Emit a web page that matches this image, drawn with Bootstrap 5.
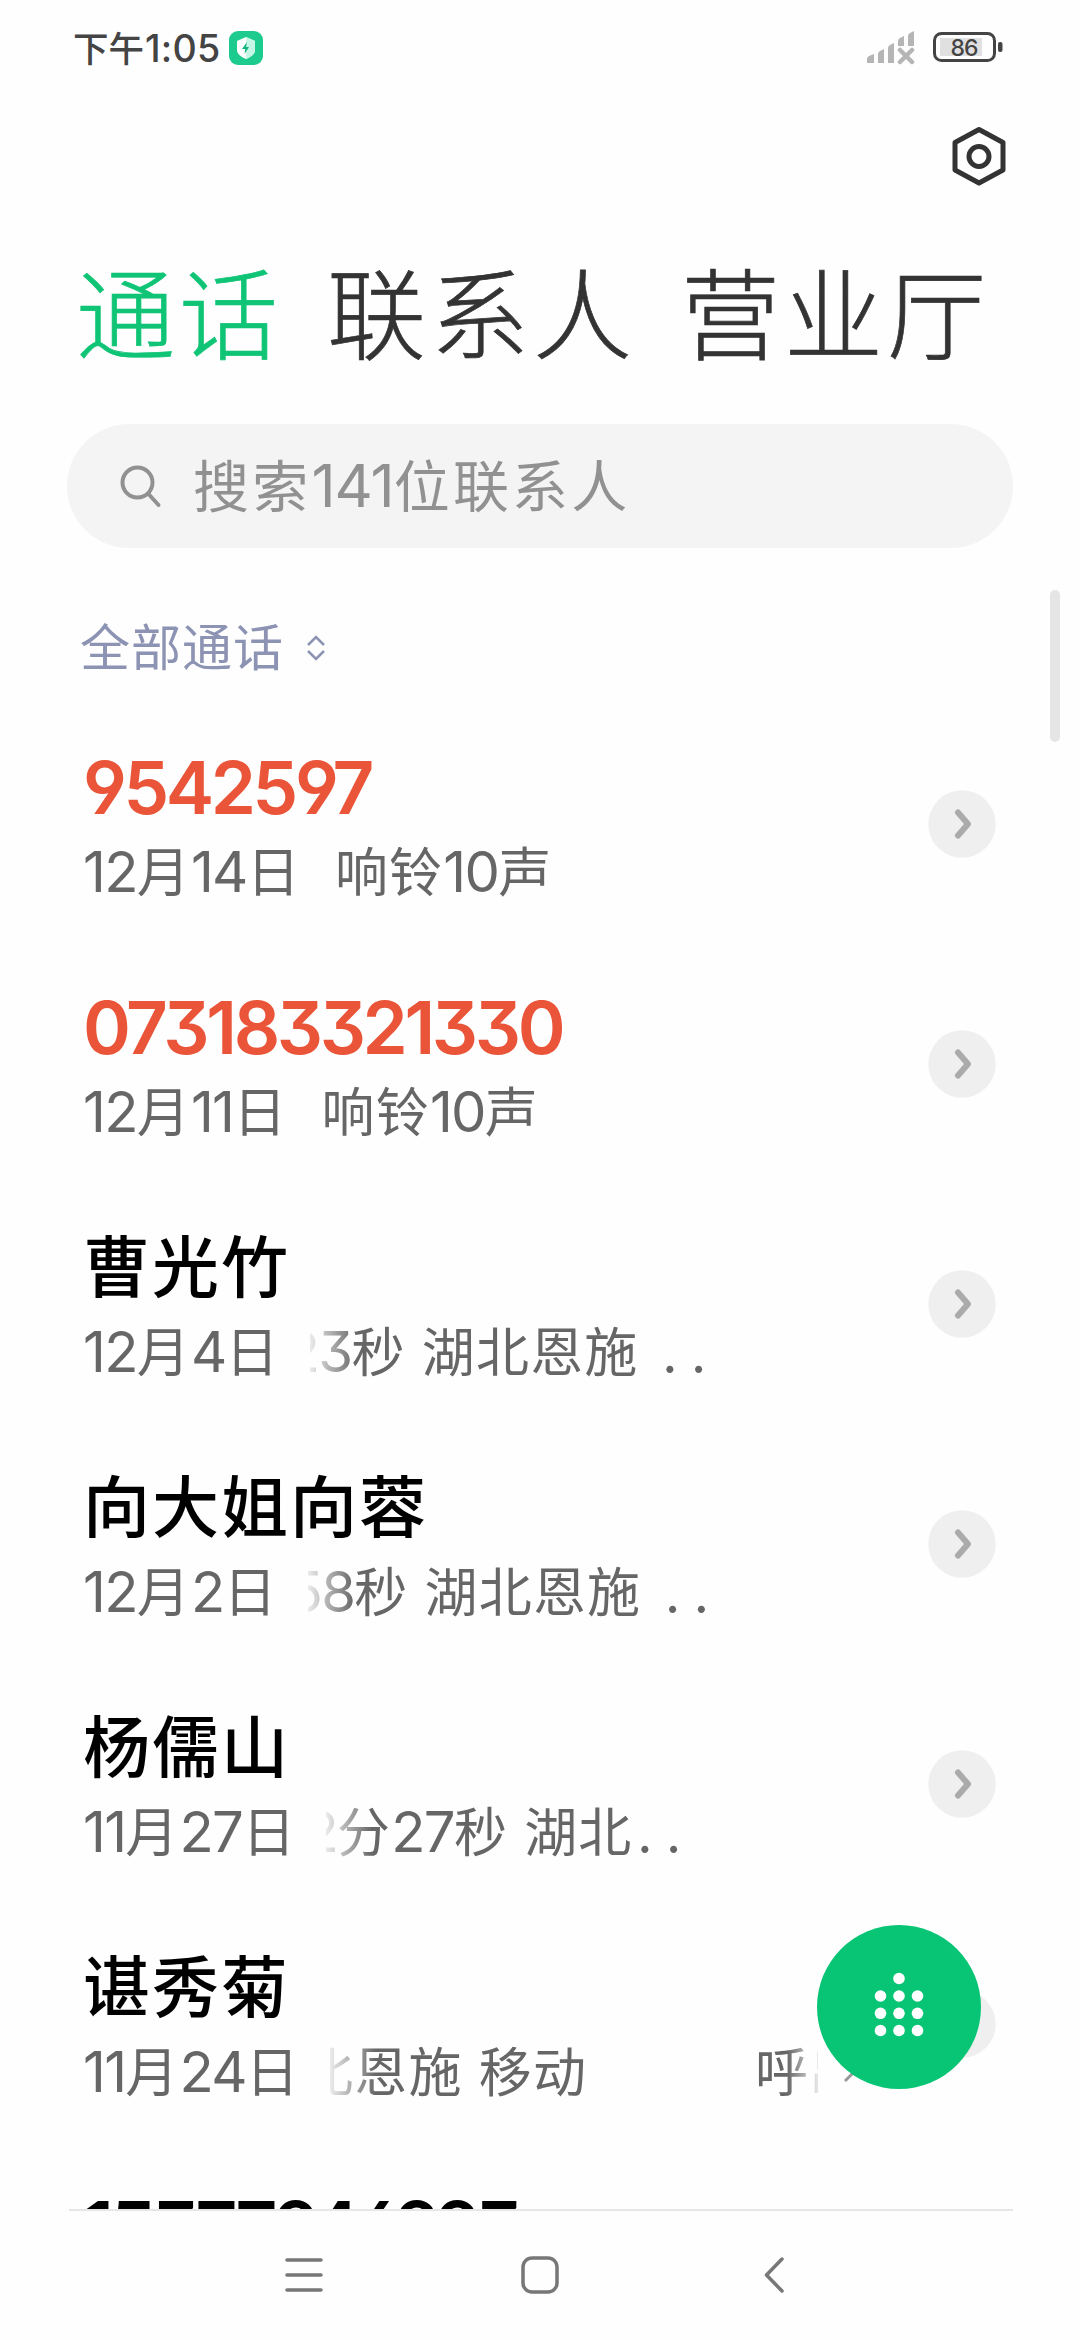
<!DOCTYPE html>
<html lang="zh-CN">
<head>
<meta charset="utf-8">
<meta name="viewport" content="width=device-width, initial-scale=1">
<title>通话</title>
<link href="https://cdn.jsdelivr.net/npm/bootstrap@5.3.0/dist/css/bootstrap.min.css" rel="stylesheet">
<script src="https://cdn.jsdelivr.net/npm/bootstrap@5.3.0/dist/js/bootstrap.bundle.min.js"></script>
<style>
  body { width: 1080px; height: 2340px; overflow: hidden; background: #fefefe; font-family: "Noto Sans CJK SC", sans-serif; color: #333; white-space: nowrap; }
  svg { display: block; flex: none; }
  .num { font-family: Inter, "Noto Sans CJK SC", sans-serif; font-feature-settings: "cv03", "cv04", "cv09"; font-size: 1.06em; line-height: 1; letter-spacing: -.03em; }
  .statusbar { height: 96px; padding: 0 77px 2px 73px; font-size: 35.5px; font-weight: 500; color: #444; }
  .statusbar .num { letter-spacing: .005em; margin-left: 1px; }
  .shield { margin: 2px 0 0 9px; }
  .batt { margin: 0 0 0 17px; }
  .statusbar .sig { margin-top: 2px; }
  .toolbar-top { height: 120px; padding-right: 73px; }
  .tabs-big { height: 208px; padding-left: 76px; font-size: 99px; font-weight: 300; -webkit-text-stroke: .7px currentColor; letter-spacing: 4px; line-height: 187px; gap: 45px; }
  .tab-on { color: #10c476; }
  .searchbox { height: 124px; margin: 0 67px 0 67px; padding-left: 52px; background: #f4f4f4; color: #919191; font-size: 56px; letter-spacing: 3.2px; }
  .searchbox .num { letter-spacing: -.018em; }
  .search-hint { margin: -7px 0 0 30px; }
  .filterbar { height: 156px; padding: 52px 0 0 80px; color: #8d93b3; font-size: 50px; letter-spacing: 1px; line-height: 88px; }
  .sorter { margin: 29px 0 0 22px; }
  .calls { height: 1505px; overflow: hidden; }
  .call-row { height: 240px; padding: 42px 84px 0 83px; background: transparent; border: 0; flex: none; color: #000; }
  .call-name { height: 74px; line-height: 74px; font-size: 67px; font-weight: 500; letter-spacing: 2px; }
  .call-name .num { font-size: 1.085em; font-weight: 570; letter-spacing: -.047em; position: relative; top: 2px; }
  .missed { color: #ea5539; }
  .call-sub { height: 78px; line-height: 78px; margin-top: 10px; font-size: 53px; color: #666; letter-spacing: 1.2px; word-spacing: 3px; }
  .ring { margin-left: 34px; }
  .marquee { margin-left: 30px; overflow: hidden; -webkit-mask-image: linear-gradient(90deg, rgba(0,0,0,.12), #000 46px); mask-image: linear-gradient(90deg, rgba(0,0,0,.12), #000 46px); }
  .slide { display: inline-block; }
  .s-a { margin-left: -24px; } .s-b { margin-left: -19px; } .s-c { margin-left: -22px; } .s-d { margin-left: -30px; }
  .dots { letter-spacing: 14px; margin-left: 24px; }
  .dots-near { margin-left: 5px; }
  .outgoing { margin-left: 168px; width: 63px; overflow: hidden; -webkit-mask-image: linear-gradient(90deg, #000 32px, rgba(0,0,0,.15)); mask-image: linear-gradient(90deg, #000 32px, rgba(0,0,0,.15)); }
  .out-arrow { margin: 23px 0 0 25px; }
  .go { position: relative; margin-top: 44px; }
  .row-out .go { margin-left: -200px; }
  .dialpad { position: absolute; left: 817px; top: 1925px; width: 164px; height: 164px; background: #07c575; border: 0; padding: 0; }
  .scroll-thumb { position: absolute; left: 1050px; top: 590px; width: 10px; height: 152px; background: #e5e5e5; }
  .navline { height: 2px; margin: 0 67px 0 69px; background: #e6e6e6; }
  .sysnav { height: 129px; padding: 0 285px 1px 284px; }
</style>
</head>
<body>
<svg width="0" height="0" class="position-absolute">
  <symbol id="chev" viewBox="0 0 68 68"><circle cx="34" cy="34" r="33.700" fill="#efefef"/><path d="M30 22.500L40 34 30 45.500" fill="none" stroke="#aaa" stroke-width="6" stroke-linecap="round" stroke-linejoin="round"/></symbol>
</svg>
<div class="statusbar d-flex align-items-center">
  <span>下午<span class="num">1:05</span></span>
  <svg class="shield" width="34" height="34" viewBox="0 0 34 34"><rect width="34" height="34" rx="9" fill="#1ccb8d"/><path d="M17 6l9 4v9c0 4-4 7-9 9-5-2-9-5-9-9v-9z" fill="#fff"/><path d="M17 6l9 4v9c0 4-4 7-9 9z" fill="#c6f7e6"/><path d="M18 11l-5 7h3.200l-.7 5 4.500-7H17z" fill="#14b57c"/></svg>
  <svg class="ms-auto sig" width="50" height="34" viewBox="0 0 50 34" fill="#b5b5b5"><path d="M1 32v-4q0-2 2-3l5-2v9zM12 32V23q0-2 2-3l4-2v14zM22 32V17q0-2 2-3l4-2v20zM32 15v-5q0-2 2-3l4-2v10zM42 15V5q0-2 2-3l4-2v15z"/><path d="M34 19l12 12m0-12L34 31" stroke="#b5b5b5" stroke-width="4.500" stroke-linecap="round"/></svg>
  <svg class="batt" width="70" height="34" viewBox="0 0 70 34"><rect x="1.500" y="3.500" width="60" height="27" rx="7" fill="none" stroke="#444" stroke-width="3"/><rect x="7" y="8" width="42" height="18" fill="#e0e0e0"/><rect x="65" y="12" width="4.500" height="10" rx="2" fill="#444"/><text x="17.500" y="25.500" font-family="Inter" font-size="23" font-weight="500" fill="#444" textLength="28">86</text></svg>
</div>
<div class="toolbar-top d-flex align-items-center justify-content-end">
  <svg width="56" height="62" viewBox="0 0 56 62" fill="none" stroke="#333" stroke-width="5" stroke-linejoin="round"><path d="M28 4.500L52 17.500V45L28 58 4 45V17.500z"/><circle cx="28" cy="31.500" r="10"/></svg>
</div>
<div class="tabs-big d-flex">
  <span class="tab-on">通话</span><span>联系人</span><span>营业厅</span>
</div>
<div class="searchbox rounded-pill d-flex align-items-center">
  <svg width="44" height="44" viewBox="0 0 44 44" fill="none" stroke="#919191" stroke-width="4" stroke-linecap="round"><circle cx="18.500" cy="18.500" r="15"/><path d="M29.500 30l10 11"/></svg>
  <span class="search-hint">搜索<span class="num">141</span>位联系人</span>
</div>
<div class="filterbar d-flex align-items-start">
  <span>全部通话</span>
  <svg class="sorter" width="20" height="40" viewBox="0 0 20 40" fill="none" stroke="#8d93b3" stroke-width="2.500"><path d="M2 16l8-8 8 8M2 22l8 8 8-8"/></svg>
</div>
<div class="calls list-group list-group-flush">
  <div class="list-group-item call-row d-flex justify-content-between">
    <div>
      <div class="call-name missed"><span class="num">9542597</span></div>
      <div class="call-sub d-flex"><span><span class="num">12</span>月<span class="num">14</span>日</span><span class="ring">响铃<span class="num">10</span>声</span></div>
    </div>
    <svg class="go" width="68" height="68"><use href="#chev"/></svg>
  </div>
  <div class="list-group-item call-row d-flex justify-content-between">
    <div>
      <div class="call-name missed"><span class="num">073183321330</span></div>
      <div class="call-sub d-flex"><span><span class="num">12</span>月<span class="num">11</span>日</span><span class="ring">响铃<span class="num">10</span>声</span></div>
    </div>
    <svg class="go" width="68" height="68"><use href="#chev"/></svg>
  </div>
  <div class="list-group-item call-row d-flex justify-content-between">
    <div>
      <div class="call-name">曹光竹</div>
      <div class="call-sub d-flex"><span><span class="num">12</span>月<span class="num">4</span>日</span><span class="marquee"><span class="slide s-a"><span class="num">23</span>秒 湖北恩施<span class="dots">..</span></span></span></div>
    </div>
    <svg class="go" width="68" height="68"><use href="#chev"/></svg>
  </div>
  <div class="list-group-item call-row d-flex justify-content-between">
    <div>
      <div class="call-name">向大姐向蓉</div>
      <div class="call-sub d-flex"><span><span class="num">12</span>月<span class="num">2</span>日</span><span class="marquee"><span class="slide s-b"><span class="num">58</span>秒 湖北恩施<span class="dots">..</span></span></span></div>
    </div>
    <svg class="go" width="68" height="68"><use href="#chev"/></svg>
  </div>
  <div class="list-group-item call-row d-flex justify-content-between">
    <div>
      <div class="call-name">杨儒山</div>
      <div class="call-sub d-flex"><span><span class="num">11</span>月<span class="num">27</span>日</span><span class="marquee"><span class="slide s-c"><span class="num">2</span>分<span class="num">27</span>秒 湖北<span class="dots dots-near">..</span></span></span></div>
    </div>
    <svg class="go" width="68" height="68"><use href="#chev"/></svg>
  </div>
  <div class="list-group-item call-row row-out d-flex justify-content-between">
    <div>
      <div class="call-name">谌秀菊</div>
      <div class="call-sub d-flex"><span><span class="num">11</span>月<span class="num">24</span>日</span><span class="marquee"><span class="slide s-d">北恩施 移动</span></span><span class="outgoing">呼出</span>
        <svg class="out-arrow" width="30" height="30" viewBox="0 0 30 30" fill="none" stroke="#999" stroke-width="3"><path d="M2 28L26 4M10 4h16v16"/></svg></div>
    </div>
    <svg class="go" width="68" height="68"><use href="#chev"/></svg>
  </div>
  <div class="list-group-item call-row d-flex justify-content-between">
    <div>
      <div class="call-name"><span class="num">15377946993</span></div>
    </div>
  </div>
</div>
<div class="navline"></div>
<div class="sysnav d-flex align-items-center justify-content-between">
  <svg width="40" height="40" viewBox="0 0 40 40" stroke="#777" stroke-width="3.500" stroke-linecap="round"><path d="M3 5h34M3 20h34M3 35h34"/></svg>
  <svg width="40" height="40" viewBox="0 0 40 40" fill="none" stroke="#777" stroke-width="3.500"><rect x="3" y="3" width="34" height="34" rx="9"/></svg>
  <svg width="40" height="40" viewBox="0 0 40 40" fill="none" stroke="#777" stroke-width="3.500" stroke-linecap="round" stroke-linejoin="round"><path d="M27 4L11.500 20 27 36"/></svg>
</div>
<div class="scroll-thumb rounded-pill"></div>
<button class="dialpad btn rounded-circle" aria-label="拨号盘">
  <svg width="164" height="164" viewBox="0 0 164 164" fill="#fff"><circle cx="82" cy="53.500" r="5.800"/><circle cx="63.500" cy="71" r="5.800"/><circle cx="82" cy="71" r="5.800"/><circle cx="100.500" cy="71" r="5.800"/><circle cx="63.500" cy="88.300" r="5.800"/><circle cx="82" cy="88.300" r="5.800"/><circle cx="100.500" cy="88.300" r="5.800"/><circle cx="63.500" cy="105.500" r="5.800"/><circle cx="82" cy="105.500" r="5.800"/><circle cx="100.500" cy="105.500" r="5.800"/></svg>
</button>
</body>
</html>
